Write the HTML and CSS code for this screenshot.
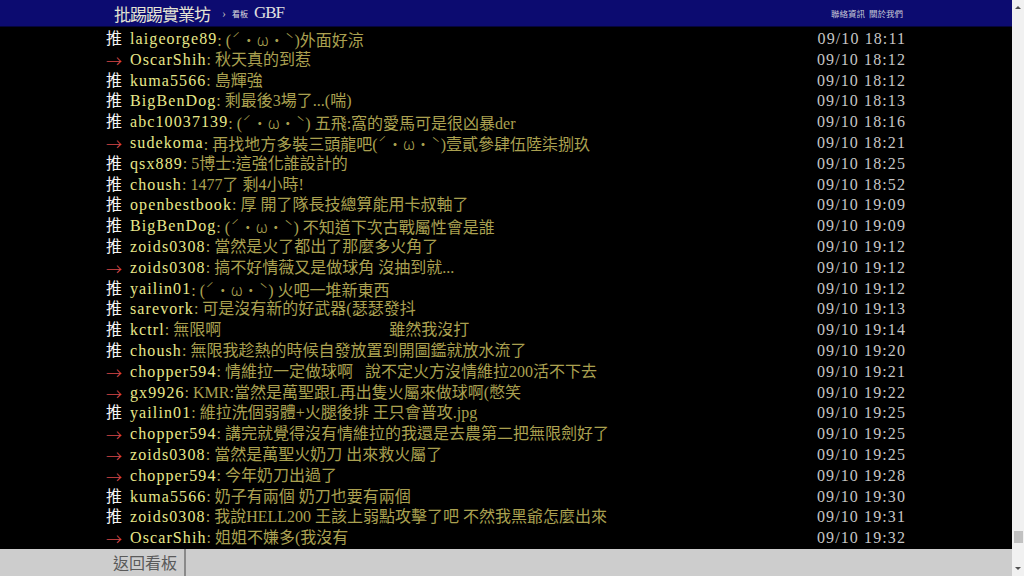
FILE: index.html
```html
<!DOCTYPE html>
<html lang="zh-Hant-TW">
<head>
    <meta charset="UTF-8">
    <meta name="viewport" content="width=device-width, initial-scale=1.0">
    <title>GBF - 批踢踢實業坊</title>
    <link rel="stylesheet" href="styles.css">
</head>
<body>

    <div class="page">
        <div class="window">
            <div class="topbar-container">
                <div class="topbar">
                    <a class="logo" href="#">批踢踢實業坊</a>
                    <span class="caret">›</span>
                    <a class="board" href="#"><span class="board-label">看板</span>GBF</a>
                    <div class="links">
                        <a href="#">聯絡資訊</a>
                        <a href="#">關於我們</a>
                    </div>
                </div>
            </div>

            <div class="main-container">
                <div class="bbs-screen">
                    <div class="push"><span class="push-tag">推</span><span class="push-userid">laigeorge89</span><span class="push-content">: (<span class="kao">ˊ・ω・ˋ</span>)外面好涼</span><span class="push-ipdatetime">09/10 18:11</span></div>
                    <div class="push"><span class="push-tag arrow">→</span><span class="push-userid">OscarShih</span><span class="push-content">: 秋天真的到惹</span><span class="push-ipdatetime">09/10 18:12</span></div>
                    <div class="push"><span class="push-tag">推</span><span class="push-userid">kuma5566</span><span class="push-content">: 島輝強</span><span class="push-ipdatetime">09/10 18:12</span></div>
                    <div class="push"><span class="push-tag">推</span><span class="push-userid">BigBenDog</span><span class="push-content">: 剩最後3場了...(喘)</span><span class="push-ipdatetime">09/10 18:13</span></div>
                    <div class="push"><span class="push-tag">推</span><span class="push-userid">abc10037139</span><span class="push-content">: (<span class="kao">ˊ・ω・ˋ</span>) 五飛:窩的愛馬可是很凶暴der</span><span class="push-ipdatetime">09/10 18:16</span></div>
                    <div class="push"><span class="push-tag arrow">→</span><span class="push-userid">sudekoma</span><span class="push-content">: 再找地方多裝三頭龍吧(<span class="kao">ˊ・ω・ˋ</span>)壹貳參肆伍陸柒捌玖</span><span class="push-ipdatetime">09/10 18:21</span></div>
                    <div class="push"><span class="push-tag">推</span><span class="push-userid">qsx889</span><span class="push-content">: 5博士:這強化誰設計的</span><span class="push-ipdatetime">09/10 18:25</span></div>
                    <div class="push"><span class="push-tag">推</span><span class="push-userid">choush</span><span class="push-content">: 1477了 剩4小時!</span><span class="push-ipdatetime">09/10 18:52</span></div>
                    <div class="push"><span class="push-tag">推</span><span class="push-userid">openbestbook</span><span class="push-content">: 厚 開了隊長技總算能用卡叔軸了</span><span class="push-ipdatetime">09/10 19:09</span></div>
                    <div class="push"><span class="push-tag">推</span><span class="push-userid">BigBenDog</span><span class="push-content">: (<span class="kao">ˊ・ω・ˋ</span>) 不知道下次古戰屬性會是誰</span><span class="push-ipdatetime">09/10 19:09</span></div>
                    <div class="push"><span class="push-tag">推</span><span class="push-userid">zoids0308</span><span class="push-content">: 當然是火了都出了那麼多火角了</span><span class="push-ipdatetime">09/10 19:12</span></div>
                    <div class="push"><span class="push-tag arrow">→</span><span class="push-userid">zoids0308</span><span class="push-content">: 搞不好情薇又是做球角 沒抽到就...</span><span class="push-ipdatetime">09/10 19:12</span></div>
                    <div class="push"><span class="push-tag">推</span><span class="push-userid">yailin01</span><span class="push-content">: (<span class="kao">ˊ・ω・ˋ</span>) 火吧一堆新東西</span><span class="push-ipdatetime">09/10 19:12</span></div>
                    <div class="push"><span class="push-tag">推</span><span class="push-userid">sarevork</span><span class="push-content">: 可是沒有新的好武器(瑟瑟發抖</span><span class="push-ipdatetime">09/10 19:13</span></div>
                    <div class="push"><span class="push-tag">推</span><span class="push-userid">kctrl</span><span class="push-content">: 無限啊<span class="wide-gap"></span>雖然我沒打</span><span class="push-ipdatetime">09/10 19:14</span></div>
                    <div class="push"><span class="push-tag">推</span><span class="push-userid">choush</span><span class="push-content">: 無限我趁熱的時候自發放置到開圖鑑就放水流了</span><span class="push-ipdatetime">09/10 19:20</span></div>
                    <div class="push"><span class="push-tag arrow">→</span><span class="push-userid">chopper594</span><span class="push-content">: 情維拉一定做球啊   說不定火方沒情維拉200活不下去</span><span class="push-ipdatetime">09/10 19:21</span></div>
                    <div class="push"><span class="push-tag arrow">→</span><span class="push-userid">gx9926</span><span class="push-content">: KMR:當然是萬聖跟L再出隻火屬來做球啊(憋笑</span><span class="push-ipdatetime">09/10 19:22</span></div>
                    <div class="push"><span class="push-tag">推</span><span class="push-userid">yailin01</span><span class="push-content">: 維拉洗個弱體+火腿後排 王只會普攻.jpg</span><span class="push-ipdatetime">09/10 19:25</span></div>
                    <div class="push"><span class="push-tag arrow">→</span><span class="push-userid">chopper594</span><span class="push-content">: 講完就覺得沒有情維拉的我還是去農第二把無限劍好了</span><span class="push-ipdatetime">09/10 19:25</span></div>
                    <div class="push"><span class="push-tag arrow">→</span><span class="push-userid">zoids0308</span><span class="push-content">: 當然是萬聖火奶刀 出來救火屬了</span><span class="push-ipdatetime">09/10 19:25</span></div>
                    <div class="push"><span class="push-tag arrow">→</span><span class="push-userid">chopper594</span><span class="push-content">: 今年奶刀出過了</span><span class="push-ipdatetime">09/10 19:28</span></div>
                    <div class="push"><span class="push-tag">推</span><span class="push-userid">kuma5566</span><span class="push-content">: 奶子有兩個 奶刀也要有兩個</span><span class="push-ipdatetime">09/10 19:30</span></div>
                    <div class="push"><span class="push-tag">推</span><span class="push-userid">zoids0308</span><span class="push-content">: 我說HELL200 王該上弱點攻擊了吧 不然我黑爺怎麼出來</span><span class="push-ipdatetime">09/10 19:31</span></div>
                    <div class="push"><span class="push-tag arrow">→</span><span class="push-userid">OscarShih</span><span class="push-content">: 姐姐不嫌多(我沒有</span><span class="push-ipdatetime">09/10 19:32</span></div>
                </div>
            </div>

            <div class="navigation-container">
                <div class="navigation">
                    <a class="board-btn" href="#">返回看板</a>
                </div>
            </div>
        </div>

        <div class="scrollbar">
            <span class="scroll-arrow up"></span>
            <span class="scroll-thumb"></span>
            <span class="scroll-arrow down"></span>
        </div>
    </div>

</body>
</html>
```

FILE: styles.css
```css
html, body {
    margin: 0;
    height: 100%;
    overflow: hidden;
}
body {
    background-color: #000;
    font-family: "Liberation Serif", "Noto Sans CJK TC", serif;
}
a {
    text-decoration: none;
    color: inherit;
}
.page {
    display: flex;
    height: 576px;
}
.window {
    flex: 1;
    display: flex;
    flex-direction: column;
}

/* top bar */
.topbar-container {
    height: 26px;
    background-color: #0c0b70;
    border-bottom: 1px solid #05053a;
}
.topbar {
    width: 800px;
    margin: 0 auto;
    height: 26px;
    display: flex;
    align-items: center;
    padding: 0 3px 0 8px;
    box-sizing: border-box;
}
.logo {
    font-size: 17px;
    letter-spacing: -1px;
    color: #e4e4d4;
}
.caret {
    font-size: 12px;
    color: #bbb;
    margin: 0 6px 0 12px;
}
.board {
    font-size: 17px;
    letter-spacing: -1px;
    color: #e0e0e0;
    display: flex;
    align-items: center;
}
.board-label {
    font-size: 8px;
    letter-spacing: 0;
    margin-right: 6px;
    color: #ddd;
}
.links {
    margin-left: auto;
    display: flex;
    gap: 4px;
    font-size: 8.5px;
    color: #c8c8d8;
    font-family: "Noto Sans CJK TC", sans-serif;
}

/* pushes */
.main-container {
    flex: 1;
    padding-top: 2px;
    overflow: hidden;
}
.bbs-screen {
    width: 800px;
    margin: 0 auto;
    font-size: 16px;
}
.push {
    display: flex;
    height: 20.8px;
    line-height: 20.8px;
    white-space: pre;
}
.push-tag {
    display: inline-block;
    width: 24px;
    color: #f4f4f4;
}
.push-tag.arrow {
    color: #d84848;
    font-family: "Noto Sans CJK TC", sans-serif;
    font-weight: 300;
    font-feature-settings: "fwid";
}
.push-userid {
    color: #e8e88a;
    letter-spacing: 1.1px;
}
.push-content {
    color: #aaa050;
}
.kao {
    font-family: "Noto Sans CJK TC", sans-serif;
    font-weight: 300;
    font-feature-settings: "fwid";
}
.wide-gap {
    display: inline-block;
    width: 168px;
}
.push-ipdatetime {
    margin-left: auto;
    color: #c6c6c6;
    letter-spacing: 1.1px;
}

/* bottom bar */
.navigation-container {
    height: 27px;
    background-color: #cdcdcd;
}
.navigation {
    width: 800px;
    margin: 0 auto;
    display: flex;
    height: 27px;
}
.board-btn {
    padding: 0 7px;
    line-height: 27px;
    font-size: 16px;
    font-family: "Noto Sans CJK TC", sans-serif;
    color: #5a5a5a;
    border-right: 2px solid #8a8a8a;
}

/* fake scrollbar */
.scrollbar {
    width: 12px;
    background-color: #f1f1f1;
    display: flex;
    flex-direction: column;
    align-items: center;
}
.scroll-arrow {
    width: 0;
    height: 0;
    border-left: 3px solid transparent;
    border-right: 3px solid transparent;
}
.scroll-arrow.up {
    margin-top: 6px;
    border-bottom: 3px solid #505050;
}
.scroll-arrow.down {
    margin-bottom: 6px;
    border-top: 3px solid #505050;
}
.scroll-thumb {
    margin-top: auto;
    margin-bottom: 24px;
    width: 9px;
    height: 12px;
    background-color: #c1c1c1;
}
```
